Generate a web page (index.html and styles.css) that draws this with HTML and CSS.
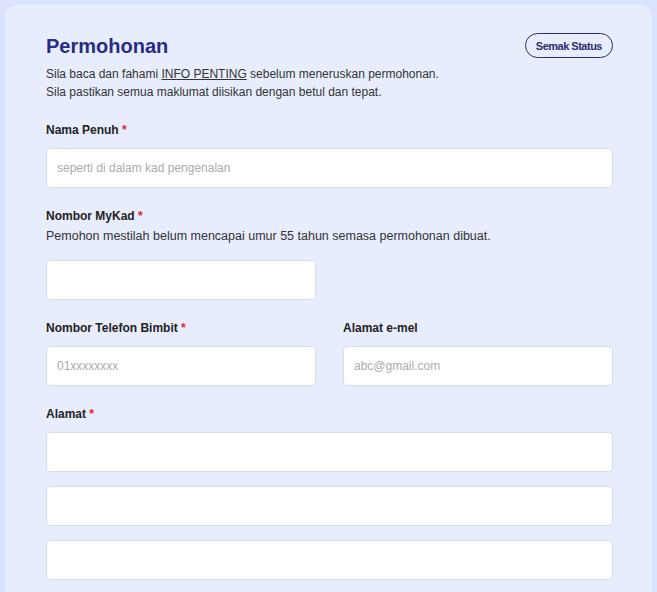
FILE: index.html
```html
<!DOCTYPE html>
<html lang="ms">
<head>
  <meta charset="UTF-8" />
  <meta name="viewport" content="width=device-width, initial-scale=1.0"/>
  <title>Permohonan</title>
  <link rel="stylesheet" href="styles.css">
</head>
<body>
  <div class="card">
    <div class="card-head">
      <h1>Permohonan</h1>
      <button class="status-btn">Semak Status</button>
    </div>
    <p class="intro">
      Sila baca dan fahami <a href="#">INFO PENTING</a> sebelum meneruskan permohonan.<br>
      Sila pastikan semua maklumat diisikan dengan betul dan tepat.
    </p>

    <form onsubmit="return false">
      <div class="field">
        <label for="nama">Nama Penuh <span class="req">*</span></label>
        <input type="text" id="nama" placeholder="seperti di dalam kad pengenalan" />
      </div>

      <div class="field">
        <div class="label-group">
          <label for="mykad">Nombor MyKad <span class="req">*</span></label>
          <p class="hint">Pemohon mestilah belum mencapai umur 55 tahun semasa permohonan dibuat.</p>
        </div>
        <div class="row">
          <input type="text" id="mykad" />
        </div>
      </div>

      <div class="row">
        <div class="field">
          <label for="telefon">Nombor Telefon Bimbit <span class="req">*</span></label>
          <input type="text" id="telefon" placeholder="01xxxxxxxx" />
        </div>
        <div class="field">
          <label for="emel">Alamat e-mel</label>
          <input type="text" id="emel" placeholder="abc@gmail.com" />
        </div>
      </div>

      <div class="field">
        <label for="alamat1">Alamat <span class="req">*</span></label>
        <div class="stack">
          <input type="text" id="alamat1" />
          <input type="text" id="alamat2" />
          <input type="text" id="alamat3" />
        </div>
      </div>
    </form>
  </div>
</body>
</html>
```

FILE: styles.css
```css
* {
  margin: 0;
  padding: 0;
  box-sizing: border-box;
}

body {
  background-color: #dbe3fc;
  color: #333;
  font-family: "Liberation Sans", Arial, sans-serif;
  padding: 5px;
}

.card {
  background-color: #e8edfd;
  border-radius: 12px;
  padding: 28px 39px 40px 41px;
}

.card-head {
  display: flex;
  align-items: center;
  justify-content: space-between;
}

h1 {
  font-size: 20px;
  line-height: 24px;
  color: #292c85;
}

.status-btn {
  height: 25px;
  padding: 0 10px;
  border: 1px solid #2b2d6e;
  border-radius: 13px;
  background: transparent;
  color: #2b2d6e;
  font-family: inherit;
  font-size: 11px;
  font-weight: bold;
  letter-spacing: -0.5px;
  cursor: pointer;
}

.intro {
  margin-top: 7px;
  font-size: 12px;
  line-height: 18px;
}

.intro a {
  color: inherit;
}

form {
  margin-top: 20px;
}

.field {
  margin-bottom: 19px;
}

label {
  display: block;
  font-size: 12px;
  font-weight: bold;
  line-height: 18px;
  color: #222;
  margin-bottom: 9px;
}

.req {
  color: #e0242b;
}

.label-group {
  margin-bottom: 15px;
}

.label-group label {
  margin-bottom: 2px;
}

.hint {
  font-size: 12.5px;
  line-height: 18px;
}

.row {
  display: grid;
  grid-template-columns: 1fr 1fr;
  column-gap: 27px;
}

.stack {
  display: flex;
  flex-direction: column;
  gap: 14px;
}

input {
  display: block;
  width: 100%;
  height: 40px;
  padding: 0 10px;
  background-color: #fff;
  border: 1px solid #d9ddea;
  border-radius: 4px;
  font-family: inherit;
  font-size: 12px;
  color: #333;
  outline: none;
}

input::placeholder {
  color: #ababab;
}
```
